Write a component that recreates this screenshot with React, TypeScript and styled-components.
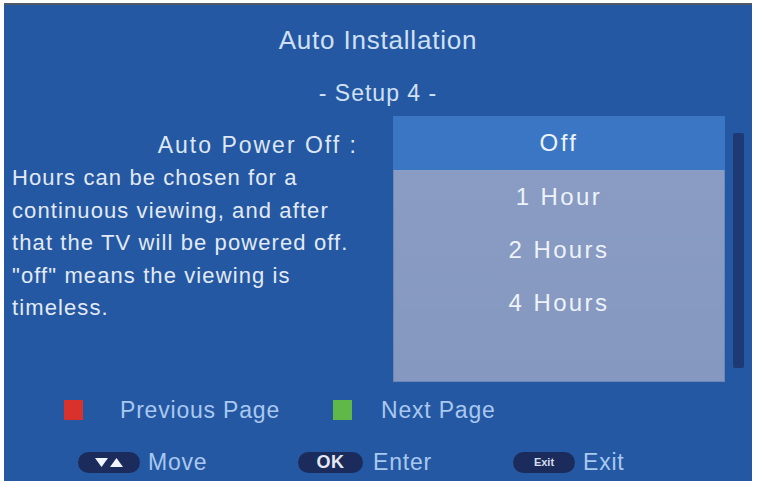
import React from 'react';
import styled, { createGlobalStyle } from 'styled-components';

const GlobalStyle = createGlobalStyle`
    html, body {
        margin: 0;
        padding: 0;
        background: #ffffff;
    }
    body {
        font-family: "Liberation Sans", Arial, sans-serif;
    }
`;

const Screen = styled.div`
    margin: 3px 5px 0 4px;
    height: 478px;
    box-sizing: border-box;
    border-top: 2px solid #4d5868;
    background-color: #2558a2;
    color: #dde7f5;
    display: flex;
    flex-direction: column;
    overflow: hidden;
`;

const Header = styled.div`
    display: flex;
    flex-direction: column;
    align-items: center;
    padding-top: 19px;
`;

const Title = styled.h1`
    margin: 0;
    font-size: 26px;
    font-weight: 400;
    line-height: 32px;
    letter-spacing: 0.8px;
    color: #cfe0f4;
`;

const SubTitle = styled.h2`
    margin: 21px 0 0;
    font-size: 23px;
    font-weight: 400;
    line-height: 32px;
    letter-spacing: 1px;
    color: #cfe0f4;
`;

const Main = styled.div`
    display: flex;
    margin-top: 7px;
    height: 266px;
`;

const InfoColumn = styled.div`
    width: 389px;
    flex-shrink: 0;
    display: flex;
    flex-direction: column;
`;

const OptionLabel = styled.div`
    margin-top: 14px;
    padding-right: 35px;
    text-align: right;
    font-size: 23px;
    line-height: 30px;
    letter-spacing: 2px;
`;

const Description = styled.p`
    margin: 2px 0 0;
    padding-left: 8px;
    font-size: 22px;
    line-height: 32.5px;
    letter-spacing: 1.1px;
    color: #e2eaf6;
`;

const OptionList = styled.ul`
    list-style: none;
    margin: 0;
    padding: 0;
    width: 332px;
    height: 266px;
    background: linear-gradient(#8b9dc4, #8598bf);
    box-shadow: inset 0 0 0 1px rgba(60, 100, 170, 0.35);
`;

const OptionItem = styled.li<{ $selected?: boolean }>`
    height: ${(p) => (p.$selected ? 54 : 53)}px;
    display: flex;
    align-items: center;
    justify-content: center;
    font-size: 24px;
    letter-spacing: 2.4px;
    color: #eef3fa;
    background-color: ${(p) => (p.$selected ? '#3b76c4' : 'transparent')};
`;

const ScrollTrack = styled.div`
    width: 11px;
    height: 235px;
    margin: 17px 0 0 8px;
    border-radius: 2px;
    background-color: #1d3a74;
`;

const Footer = styled.div`
    display: flex;
    flex-direction: column;
`;

const HintRow = styled.div<{ $top: number; $left: number }>`
    display: flex;
    align-items: center;
    height: 28px;
    margin-top: ${(p) => p.$top}px;
    padding-left: ${(p) => p.$left}px;
`;

const Hint = styled.div<{ $width?: number; $gap: number }>`
    display: flex;
    align-items: center;
    gap: ${(p) => p.$gap}px;
    width: ${(p) => (p.$width ? `${p.$width}px` : 'auto')};
    flex-shrink: 0;
`;

const Swatch = styled.span<{ $color: string }>`
    display: block;
    width: 19px;
    height: 20px;
    background-color: ${(p) => p.$color};
`;

const HintText = styled.span`
    font-size: 23px;
    letter-spacing: 0.8px;
    color: #a9c8f0;
`;

const KeyPill = styled.span<{ $width: number }>`
    display: flex;
    align-items: center;
    justify-content: center;
    gap: 2px;
    width: ${(p) => p.$width}px;
    height: 21px;
    border-radius: 11px;
    background-color: #1b2c5c;
    color: #e8eef8;
`;

const OkText = styled.span`
    font-size: 18px;
    font-weight: 700;
    letter-spacing: 0.5px;
    color: #e4e9f3;
`;

const ExitText = styled.span`
    font-size: 11px;
    font-weight: 700;
    color: #d8dfee;
`;

const Triangle: React.FC<{ up?: boolean }> = ({ up }) => (
    <svg width="13" height="9" viewBox="0 0 13 9">
        {up ? <polygon points="0,9 13,9 6.5,0" fill="#f2f5fb" /> : <polygon points="0,0 13,0 6.5,9" fill="#f2f5fb" />}
    </svg>
);

const options = ['Off', '1 Hour', '2 Hours', '4 Hours'];

const App: React.FC = () => {
    return (
        <>
            <GlobalStyle />
            <Screen>
                <Header>
                    <Title>Auto Installation</Title>
                    <SubTitle>- Setup 4 -</SubTitle>
                </Header>
                <Main>
                    <InfoColumn>
                        <OptionLabel>Auto Power Off :</OptionLabel>
                        <Description>
                            Hours can be chosen for a<br />
                            continuous viewing, and after<br />
                            that the TV will be powered off.<br />
                            "off" means the viewing is<br />
                            timeless.
                        </Description>
                    </InfoColumn>
                    <OptionList>
                        {options.map((o, i) => (
                            <OptionItem key={o} $selected={i === 0}>
                                {o}
                            </OptionItem>
                        ))}
                    </OptionList>
                    <ScrollTrack />
                </Main>
                <Footer>
                    <HintRow $top={14} $left={60}>
                        <Hint $width={269} $gap={37}>
                            <Swatch $color="#d9322c" />
                            <HintText>Previous Page</HintText>
                        </Hint>
                        <Hint $gap={29}>
                            <Swatch $color="#5fb848" />
                            <HintText>Next Page</HintText>
                        </Hint>
                    </HintRow>
                    <HintRow $top={24} $left={74}>
                        <Hint $width={220} $gap={8}>
                            <KeyPill $width={62}>
                                <Triangle />
                                <Triangle up />
                            </KeyPill>
                            <HintText>Move</HintText>
                        </Hint>
                        <Hint $width={215} $gap={10}>
                            <KeyPill $width={65}>
                                <OkText>OK</OkText>
                            </KeyPill>
                            <HintText>Enter</HintText>
                        </Hint>
                        <Hint $gap={8}>
                            <KeyPill $width={62}>
                                <ExitText>Exit</ExitText>
                            </KeyPill>
                            <HintText>Exit</HintText>
                        </Hint>
                    </HintRow>
                </Footer>
            </Screen>
        </>
    );
};

export default App;
